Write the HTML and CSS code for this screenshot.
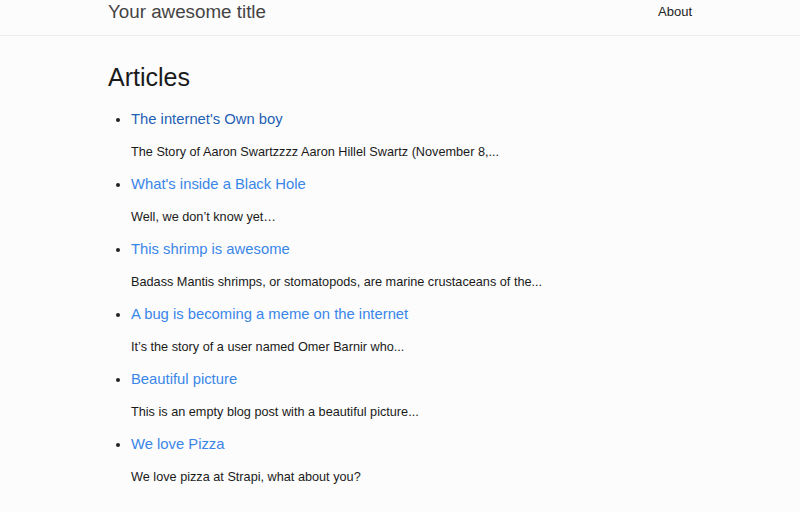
FILE: index.html
```html
<!DOCTYPE html>
<html>
<head>
<meta charset="utf-8">
<title>Articles</title>
<link rel="stylesheet" href="styles.css">
</head>
<body>
<header class="topbar">
  <div class="container bar">
    <a class="brand" href="#">Your awesome title</a>
    <a class="nav" href="#">About</a>
  </div>
</header>
<main class="container">
  <h1 class="heading">Articles</h1>
  <ul class="list">
    <li class="item"><a class="link visited" href="#">The internet's Own boy</a><p class="desc">The Story of Aaron Swartzzzz Aaron Hillel Swartz (November 8,...</p></li>
    <li class="item"><a class="link" href="#">What's inside a Black Hole</a><p class="desc">Well, we don’t know yet…</p></li>
    <li class="item"><a class="link" href="#">This shrimp is awesome</a><p class="desc">Badass Mantis shrimps, or stomatopods, are marine crustaceans of the...</p></li>
    <li class="item"><a class="link" href="#">A bug is becoming a meme on the internet</a><p class="desc">It’s the story of a user named Omer Barnir who...</p></li>
    <li class="item"><a class="link" href="#">Beautiful picture</a><p class="desc">This is an empty blog post with a beautiful picture...</p></li>
    <li class="item"><a class="link" href="#">We love Pizza</a><p class="desc">We love pizza at Strapi, what about you?</p></li>
  </ul>
</main>
</body>
</html>
```

FILE: styles.css
```css
* { box-sizing: border-box; }
html, body { margin: 0; padding: 0; }
body {
  background: #fcfcfc;
  font-family: "Liberation Sans", Arial, sans-serif;
  color: #222;
}
.container {
  width: 584px;
  margin: 0 auto;
}
.topbar {
  height: 36px;
  border-bottom: 1px solid #ececec;
}
.bar {
  display: flex;
  justify-content: space-between;
  align-items: flex-start;
}
.brand {
  font-size: 18.8px;
  line-height: 24px;
  color: #444;
  text-decoration: none;
}
.nav {
  font-size: 13px;
  line-height: 24px;
  color: #222;
  text-decoration: none;
}
.heading {
  margin: 26px 0 0;
  font-size: 25px;
  line-height: 30px;
  font-weight: normal;
  color: #1a1a1a;
}
.list {
  margin: 17px 0 0;
  padding: 0 0 0 23px;
}
.item {
  font-size: 14.8px;
  line-height: 20px;
}
.link {
  color: #3a86e8;
  text-decoration: none;
}
.link.visited { color: #1f5fb4; }
.desc {
  margin: 13px 0 12px;
  font-size: 12.7px;
  line-height: 20px;
  color: #1a1a1a;
}
```
